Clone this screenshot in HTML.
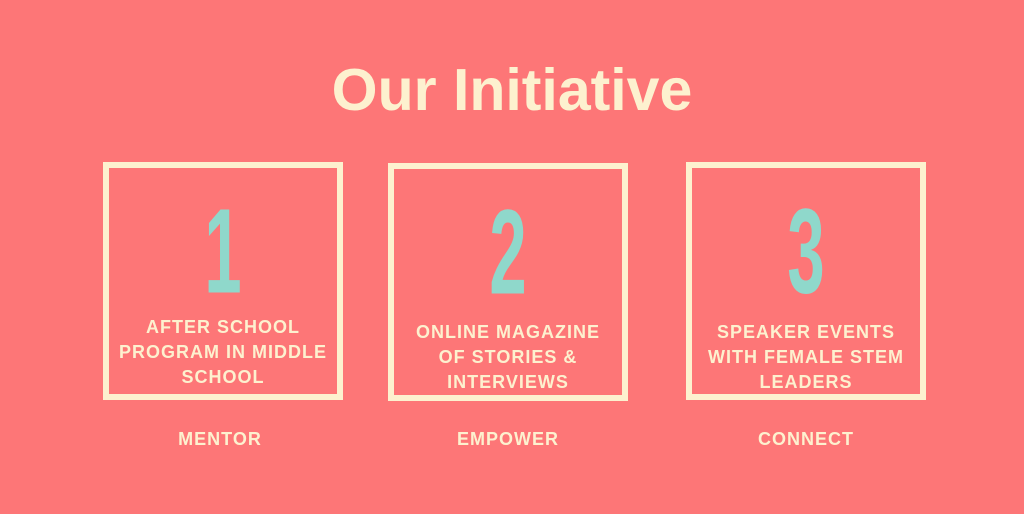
<!DOCTYPE html>
<html><head><style>
html,body{margin:0;padding:0}
body{width:1024px;height:514px;background:#fd7677;position:relative;overflow:hidden;font-family:"Liberation Sans",sans-serif;color:#fdf1cf}
.t{position:absolute;left:0;width:1024px;top:58px;text-align:center;font-weight:bold;font-size:59px;line-height:64px}
.box{position:absolute;width:228px;height:226px;border:6px solid #fdf1cf}
.num{position:absolute;left:0;right:0;top:23px;text-align:center;color:#8fd8cb;font-family:"Liberation Sans",sans-serif;font-weight:bold;font-size:93px;line-height:93px;transform:scale(0.72,1.3);transform-origin:top}
.txt{position:absolute;left:-20px;right:-20px;text-align:center;font-weight:bold;font-size:18px;line-height:25px;letter-spacing:1px}
.lab{position:absolute;width:240px;text-align:center;font-weight:bold;font-size:18px;letter-spacing:1px;top:429px}
</style></head><body>
<div class="t">Our Initiative</div>
<div class="box" style="left:103px;top:162px"><div class="num">1</div><div class="txt" style="top:147px">AFTER SCHOOL<br>PROGRAM IN MIDDLE<br>SCHOOL</div></div>
<div class="box" style="left:388px;top:163px"><div class="num">2</div><div class="txt" style="top:151px">ONLINE MAGAZINE<br>OF STORIES &amp;<br>INTERVIEWS</div></div>
<div class="box" style="left:686px;top:162px"><div class="num">3</div><div class="txt" style="top:152px">SPEAKER EVENTS<br>WITH FEMALE STEM<br>LEADERS</div></div>
<div class="lab" style="left:100px">MENTOR</div>
<div class="lab" style="left:388px">EMPOWER</div>
<div class="lab" style="left:686px">CONNECT</div>
</body></html>
